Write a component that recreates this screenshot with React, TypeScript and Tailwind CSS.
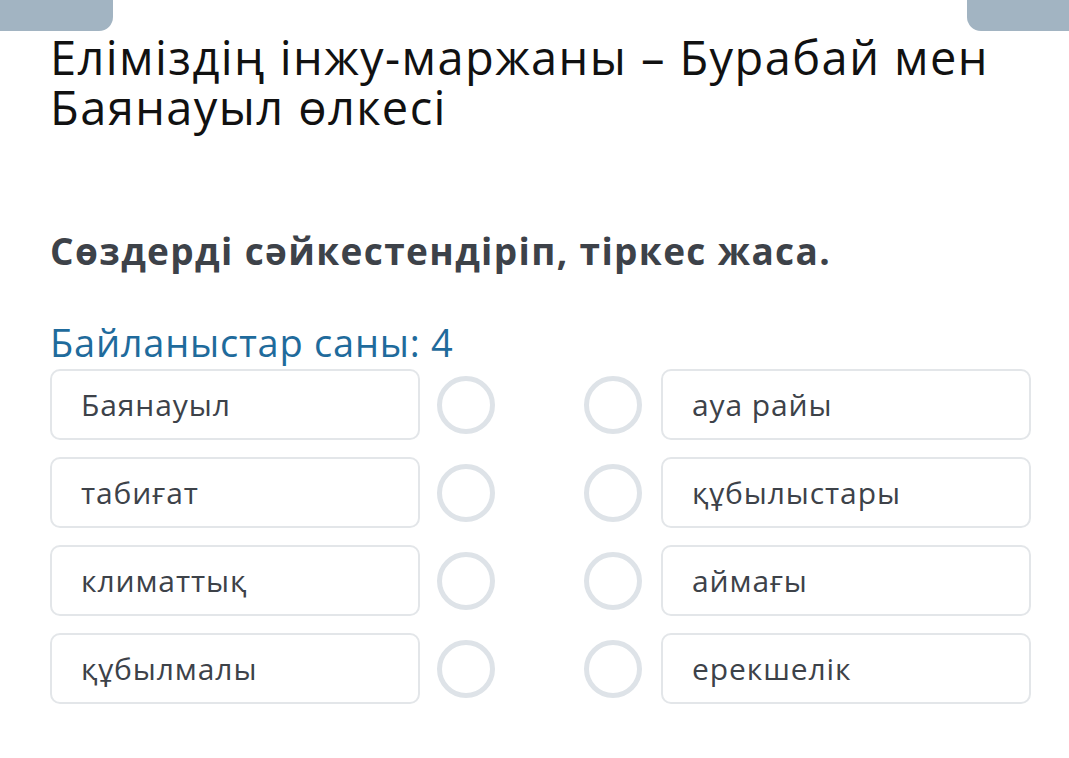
const leftItems = ["Баянауыл", "табиғат", "климаттық", "құбылмалы"];
const rightItems = ["ауа райы", "құбылыстары", "аймағы", "ерекшелік"];

function Card({ text }: { text: string }) {
  return (
    <div className="w-[370px] h-[71px] rounded-[10px] border-2 border-[#e3e6e9] bg-white flex items-center pl-[29px] text-[30px] tracking-[0.03em] text-[#3d4249]">
      {text}
    </div>
  );
}

function Dot() {
  return <div className="w-[58px] h-[58px] rounded-full border-[5px] border-[#dee3e8]" />;
}

export default function App() {
  return (
    <div
      className="relative w-[1069px] h-[758px] bg-white overflow-hidden"
      style={{ fontFamily: '"Open Sans", "Noto Sans", sans-serif' }}
    >
      {/* top tabs */}
      <div className="absolute top-0 left-0 w-[113px] h-[31px] bg-[#a2b4c2] rounded-br-[14px]" />
      <div className="absolute top-0 right-0 w-[102px] h-[31px] bg-[#a2b4c2] rounded-bl-[14px]" />

      <div className="pl-[50px] pt-[32px]">
        <h1 className="text-[47px] leading-[50px] tracking-[0.03em] text-[#111] font-normal">
          Еліміздің інжу-маржаны – Бурабай мен
          <br />
          Баянауыл өлкесі
        </h1>

        <p className="mt-[97px] text-[37px] leading-[44px] tracking-[0.037em] font-bold text-[#3d4249]">
          Сөздерді сәйкестендіріп, тіркес жаса.
        </p>

        <p className="mt-[47px] text-[38px] leading-[44px] tracking-[0.02em] text-[#1f6b9c]">
          Байланыстар саны: 4
        </p>

        <div className="mt-[5px] flex flex-col gap-[17px]">
          {leftItems.map((l, i) => (
            <div key={l} className="flex items-center">
              <Card text={l} />
              <div className="ml-[17px]">
                <Dot />
              </div>
              <div className="ml-[89px]">
                <Dot />
              </div>
              <div className="ml-[19px]">
                <Card text={rightItems[i]} />
              </div>
            </div>
          ))}
        </div>
      </div>
    </div>
  );
}
